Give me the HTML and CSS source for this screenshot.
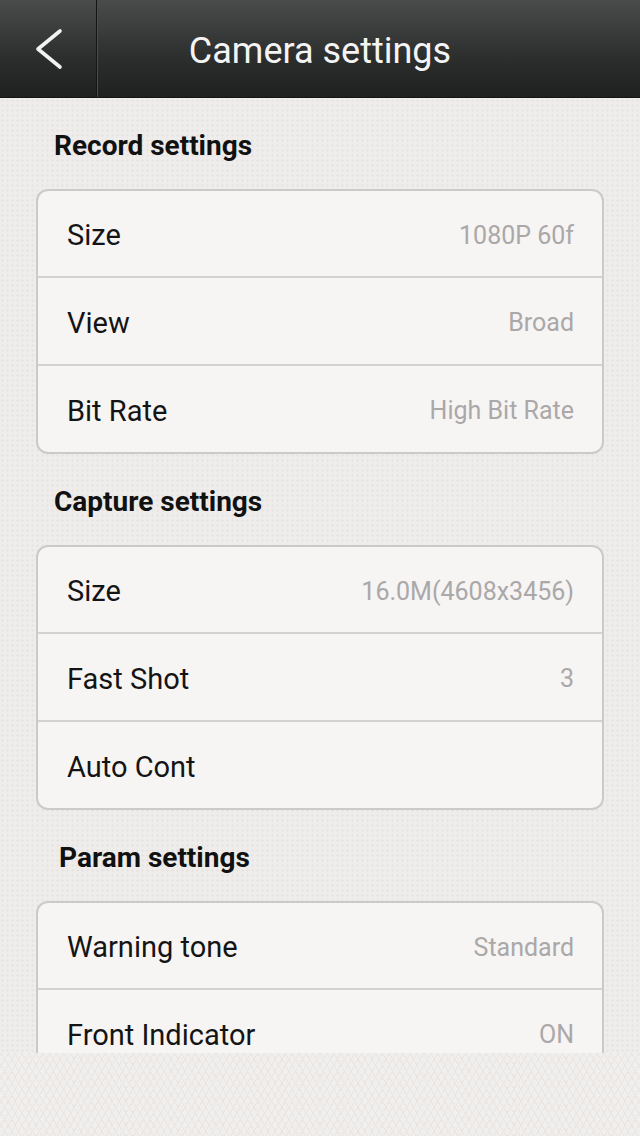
FILE: index.html
```html
<!DOCTYPE html>
<html>
<head>
<meta charset="UTF-8">
<title>Camera settings</title>
<link rel="stylesheet" href="styles.css">
</head>
<body>
	<div class="app">
		<header class="topbar">
			<div class="back">
				<svg width="32" height="42" viewBox="0 0 32 42">
					<path d="M28 3 L6 21 L28 39" fill="none" stroke="#f2f2f2" stroke-width="3.6" stroke-linecap="round" stroke-linejoin="round"/>
				</svg>
			</div>
			<h1 class="title">Camera settings</h1>
		</header>

		<main class="content">
			<h2 class="group-title">Record settings</h2>
			<div class="card">
				<div class="row"><span class="label">Size</span><span class="value">1080P 60f</span></div>
				<div class="row"><span class="label">View</span><span class="value">Broad</span></div>
				<div class="row"><span class="label">Bit Rate</span><span class="value">High Bit Rate</span></div>
			</div>

			<h2 class="group-title">Capture settings</h2>
			<div class="card">
				<div class="row"><span class="label">Size</span><span class="value">16.0M(4608x3456)</span></div>
				<div class="row"><span class="label">Fast Shot</span><span class="value">3</span></div>
				<div class="row"><span class="label">Auto Cont</span><span class="value"></span></div>
			</div>

			<h2 class="group-title shift">Param settings</h2>
			<div class="card">
				<div class="row"><span class="label">Warning tone</span><span class="value">Standard</span></div>
				<div class="row"><span class="label">Front Indicator</span><span class="value">ON</span></div>
			</div>
		</main>

		<div class="bottom"></div>
	</div>
</body>
</html>
```

FILE: styles.css
```css
html, body {
	margin : 0;
	padding : 0;
}
body {
	font-family : Roboto, "Noto Sans", sans-serif;
	background : #efedeb;
}
.app {
	width : 640px;
	height : 1136px;
	display : flex;
	flex-direction : column;
	overflow : hidden;
}

/* top bar */
.topbar {
	height : 98px;
	flex : none;
	display : flex;
	background : linear-gradient(#4a4b4b, #2c2d2d 60%, #1f2020);
	border-bottom : 1px solid #141414;
	box-sizing : border-box;
}
.back {
	width : 97px;
	flex : none;
	display : flex;
	align-items : center;
	justify-content : center;
	border-right : 1px solid #151515;
	box-shadow : 1px 0 0 #4a4b4b;
	box-sizing : border-box;
}
.title {
	flex : 1;
	margin : 0;
	padding : 4px 97px 0 0;
	text-align : center;
	line-height : 94px;
	font-size : 36px;
	font-weight : normal;
	color : #f4f4f4;
}

/* list */
.content {
	height : 955px;
	flex : none;
	overflow : hidden;
	background-color : #efedeb;
	background-image : radial-gradient(#e7e4e2 1px, transparent 1.2px);
	background-size : 5px 5px;
}
.group-title {
	height : 91px;
	margin : 0;
	padding : 4px 0 0 54px;
	box-sizing : border-box;
	display : flex;
	align-items : center;
	font-size : 28px;
	font-weight : bold;
	color : #111;
}
.group-title.shift {
	padding-left : 59px;
}
.card {
	margin : 0 36px;
	background : #f7f4f4;
	border : 2px solid #cbc9c9;
	border-radius : 12px;
}
.row {
	height : 85px;
	display : flex;
	align-items : center;
	justify-content : space-between;
	padding : 3px 28px 0 29px;
	box-sizing : border-box;
}
.row + .row {
	border-top : 2px solid #d3d1d1;
	height : 88px;
}
.label {
	font-size : 29px;
	color : #141414;
}
.value {
	font-size : 25px;
	color : #aaa8a8;
}

.bottom {
	flex : 1;
	background-color : #f1efee;
	background-image : repeating-linear-gradient(60deg, #e8e5e3 0 1px, transparent 1px 6px), repeating-linear-gradient(-60deg, #e8e5e3 0 1px, transparent 1px 6px);
}
```
